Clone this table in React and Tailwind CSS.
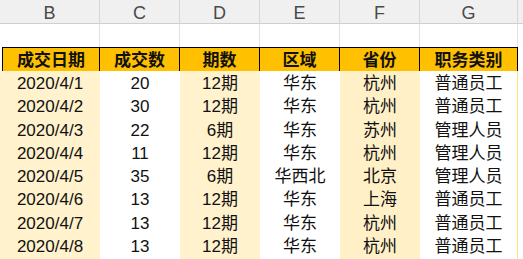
import React from "react";

const cols = ["B", "C", "D", "E", "F", "G"];
const heads = ["成交日期", "成交数", "期数", "区域", "省份", "职务类别"];
const rows = [
  ["2020/4/1", "20", "12期", "华东", "杭州", "普通员工"],
  ["2020/4/2", "30", "12期", "华东", "杭州", "普通员工"],
  ["2020/4/3", "22", "6期", "华东", "苏州", "管理人员"],
  ["2020/4/4", "11", "12期", "华东", "杭州", "管理人员"],
  ["2020/4/5", "35", "6期", "华西北", "北京", "管理人员"],
  ["2020/4/6", "13", "12期", "华东", "上海", "普通员工"],
  ["2020/4/7", "13", "12期", "华东", "杭州", "普通员工"],
  ["2020/4/8", "13", "12期", "华东", "杭州", "普通员工"],
  ["", "", "", "", "", ""],
];

const grid = "grid grid-cols-[100px_80px_80px_80px_80px_98px_1fr]";
// shaded columns: B, D, F
const shade = ["bg-[#fff2cc]", "bg-white", "bg-[#fff2cc]", "bg-white", "bg-[#fff0c8]", "bg-white"];

export default function App() {
  return (
    <div
      className="w-[523px] h-[259px] overflow-hidden bg-white text-[#111]"
      style={{ fontFamily: '"Liberation Sans", "Noto Sans CJK SC", sans-serif' }}
    >
      {/* column letters */}
      <div className={`${grid} h-[24px] bg-[#f0f0f0] border-b border-[#cfcfcf]`}>
        {cols.map((c) => (
          <div key={c} className="flex items-center justify-center border-r border-[#d6d6d6] text-[18px] text-[#4a4a4a]">
            {c}
          </div>
        ))}
        <div />
      </div>

      {/* empty row */}
      <div className={`${grid} h-[23px]`}>
        {cols.map((c) => (
          <div key={c} className="border-r border-[#e2e2e2]" />
        ))}
        <div />
      </div>

      {/* table header */}
      <div className={`${grid} h-[24px]`}>
        {heads.map((h, i) => (
          <div
            key={h}
            className={`flex items-center justify-center bg-[#ffc000] border-y border-r border-black font-bold text-[17px] ${i === 0 ? "ml-[2px] border-l" : ""}`}
          >
            {h}
          </div>
        ))}
        <div />
      </div>

      {/* data */}
      {rows.map((r, ri) => (
        <div key={ri} className={`${grid} h-[23.25px]`}>
          {r.map((v, i) => (
            <div
              key={i}
              className={`flex items-center justify-center border-b border-[#ffe08a] text-[17px] ${shade[i]} ${i === 5 ? "border-r" : ""}`}
            >
              {v}
            </div>
          ))}
          <div />
        </div>
      ))}
    </div>
  );
}
